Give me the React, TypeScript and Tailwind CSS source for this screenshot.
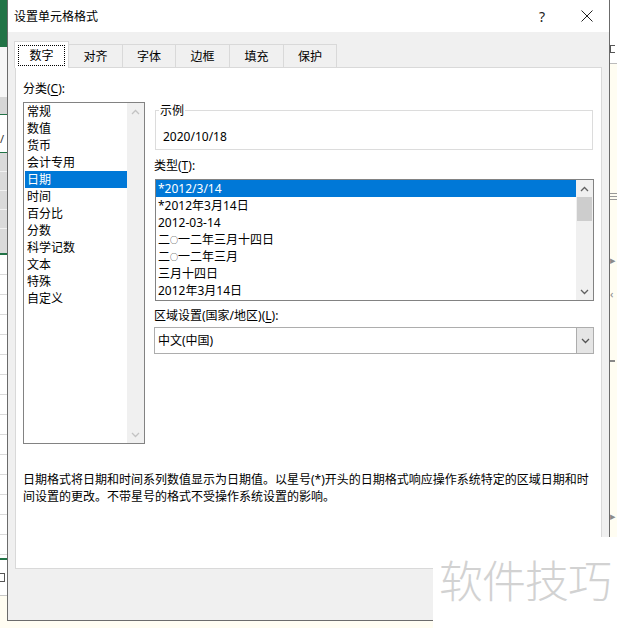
import type { ReactNode } from "react";

const categories = [
  "常规",
  "数值",
  "货币",
  "会计专用",
  "日期",
  "时间",
  "百分比",
  "分数",
  "科学记数",
  "文本",
  "特殊",
  "自定义",
];

const Zero = () => <span className="text-[8px] align-[1px]">○</span>;

const types: ReactNode[] = [
  "*2012/3/14",
  "*2012年3月14日",
  "2012-03-14",
  <>
    二<Zero />一二年三月十四日
  </>,
  <>
    二<Zero />一二年三月
  </>,
  "三月十四日",
  "2012年3月14日",
];

const tabs = [
  { label: "对齐", w: "w-[55px]" },
  { label: "字体", w: "w-[54px]" },
  { label: "边框", w: "w-[55px]" },
  { label: "填充", w: "w-[55px]" },
  { label: "保护", w: "w-[54px]" },
];

const Chevron = ({ dir, className }: { dir: "up" | "down"; className?: string }) => (
  <svg width="9" height="6" viewBox="0 0 9 6" className={className}>
    <polyline
      points={dir === "up" ? "1,5 4.5,1.5 8,5" : "1,1 4.5,4.5 8,1"}
      fill="none"
      stroke="currentColor"
      strokeWidth="1.3"
    />
  </svg>
);

const Label = ({ children }: { children: ReactNode }) => (
  <div className="h-[17px] leading-[17px] text-[12px] text-[#000]">{children}</div>
);

const LeftStrip = () => (
  <div className="w-[7px] h-full flex flex-col shrink-0">
    <div className="h-[47px] bg-[#217346]" />
    <div className="h-[50px] bg-[#f7f7f7]" />
    <div className="h-[18px] bg-[#d6d6d6] border-b border-[#217346]" />
    <div className="h-[38px] bg-white border-b border-[#217346] text-[11px] leading-[20px] pt-[14px] text-[#333] overflow-hidden">
      /
    </div>
    <div className="h-[100px] bg-[#dadada] flex flex-col">
      <div className="h-[19px] border-b border-[#f2f2f2]" />
      <div className="h-[19px] border-b border-[#f2f2f2]" />
      <div className="h-[19px] border-b border-[#f2f2f2]" />
      <div className="h-[19px] border-b border-[#f2f2f2]" />
    </div>
    <div className="h-[2px] bg-[#217346]" />
    <div className="h-[303px] bg-white flex flex-col">
      {Array.from({ length: 15 }).map((_, i) => (
        <div key={i} className="h-[20px] border-b border-[#dadada] shrink-0" />
      ))}
    </div>
    <div className="h-[2px] bg-[#217346]" />
    <div className="h-[36px] bg-white flex items-center border-b border-[#c8c8c8]">
      <div className="w-[5px] h-[9px] border border-[#555] border-l-0" />
    </div>
    <div className="flex-1 bg-[#fffdf2]" />
  </div>
);

const RightStrip = () => (
  <div className="w-[7px] h-full flex flex-col shrink-0 text-[#8a8a8a] text-[11px] overflow-hidden">
    <div className="h-[34px] bg-white" />
    <div className="h-[30px] bg-white border-b border-[#bbb] flex items-center">
      <div className="w-[5px] h-[8px] border border-[#555] border-r-0" />
    </div>
    <div className="flex-1 bg-[#fffdf2] flex flex-col">
      <div className="mt-[128px] h-[10px] flex flex-col gap-[2px] pt-[1px]">
        <div className="h-px bg-[#999]" />
        <div className="h-px bg-[#999]" />
        <div className="h-px bg-[#999]" />
      </div>
      <div className="mt-[52px] leading-[12px]">▸</div>
      <div className="mt-[22px] leading-[12px]">‹</div>
      <div className="mt-[60px] h-[2px] w-[5px] bg-[#888]" />
      <div className="mt-[148px] leading-[12px]">▸</div>
    </div>
  </div>
);

const ScrollTrack = ({ dim, thumb }: { dim?: boolean; thumb?: boolean }) => (
  <div className="w-[17px] h-full bg-[#f0f0f0] flex flex-col shrink-0">
    <div className={`h-[17px] flex items-center justify-center ${dim ? "text-[#c3c3c3]" : "text-[#606060]"}`}>
      <Chevron dir="up" />
    </div>
    {thumb && <div className="h-[24px] mx-px bg-[#cdcdcd]" />}
    <div className="flex-1" />
    <div className={`h-[17px] flex items-center justify-center ${dim ? "text-[#c3c3c3]" : "text-[#606060]"}`}>
      <Chevron dir="down" />
    </div>
  </div>
);

const App = () => {
  return (
    <div className="w-[617px] h-[628px] relative overflow-hidden bg-[#fffdf2] flex items-start font-['Noto_Sans','Noto_Sans_CJK_SC',sans-serif]">
      <LeftStrip />

      <div className="w-[603px] h-[621px] shrink-0 border-x border-b border-[#6b6b6b] bg-[#f0f0f0] flex flex-col">
        {/* title bar */}
        <div className="h-[32px] bg-white flex items-center pl-[6px] shrink-0">
          <span className="text-[12px] leading-[17px] text-[#000]">设置单元格格式</span>
          <span className="ml-auto text-[14px] leading-[17px] text-[#222]">?</span>
          <svg width="12" height="12" viewBox="0 0 12 12" className="ml-[36px] mr-[16px] text-[#222]">
            <path d="M0.5 0.5 L11.5 11.5 M11.5 0.5 L0.5 11.5" stroke="currentColor" strokeWidth="1" />
          </svg>
        </div>

        <div className="flex-1 flex flex-col pt-[9px]">
          {/* tabs */}
          <div className="flex items-end h-[27px] pl-[6px] text-[12px] text-[#000]">
            <div className="relative z-10 w-[55px] h-[27px] bg-white border border-b-0 border-[#d9d9d9] p-[3px] pb-[2px]">
              <div className="h-full border border-dotted border-[#000] flex items-center justify-center leading-[17px]">
                数字
              </div>
            </div>
            {tabs.map((t) => (
              <div
                key={t.label}
                className={`${t.w} h-[24px] -ml-px bg-[#f0f0f0] border border-[#d9d9d9] flex items-center justify-center leading-[17px]`}
              >
                {t.label}
              </div>
            ))}
          </div>

          {/* panel */}
          <div className="ml-[7px] -mt-px w-[587px] h-[502px] bg-white border border-[#d9d9d9] flex flex-col pl-[7px] pt-[12px] text-[12px] text-[#000]">
            <div className="flex gap-[9px]">
              {/* category column */}
              <div className="w-[122px] flex flex-col">
                <Label>
                  分类(<span className="underline underline-offset-2">C</span>):
                </Label>
                <div className="mt-[5px] h-[342px] border border-[#828282] flex">
                  <div className="flex-1 flex flex-col">
                    {categories.map((c) => (
                      <div
                        key={c}
                        className={`h-[17px] leading-[17px] pl-[2px] ml-px ${
                          c === "日期" ? "bg-[#0078d7] text-white" : ""
                        }`}
                      >
                        {c}
                      </div>
                    ))}
                  </div>
                  <ScrollTrack dim />
                </div>
              </div>

              {/* right column */}
              <div className="w-[440px] flex flex-col pt-[22px]">
                <fieldset className="ml-px w-[438px] border border-[#dcdcdc] pl-[3px]">
                  <legend className="px-[1px] h-[17px] leading-[17px]">示例</legend>
                  <div className="pt-[9px] pb-[4px] pl-[4px] leading-[17px]">2020/10/18</div>
                </fieldset>

                <div className="mt-[7px]">
                  <Label>
                    类型(<span className="underline underline-offset-2">T</span>):
                  </Label>
                </div>
                <div className="mt-[5px] ml-px w-[439px] h-[122px] border border-[#828282] flex">
                  <div className="flex-1 flex flex-col">
                    {types.map((t, i) => (
                      <div
                        key={i}
                        className={`h-[17px] leading-[17px] pl-[2px] ${
                          i === 0 ? "bg-[#0078d7] text-white" : ""
                        }`}
                      >
                        {t}
                      </div>
                    ))}
                  </div>
                  <ScrollTrack thumb />
                </div>

                <div className="mt-[6px]">
                  <Label>
                    区域设置(国家/地区)(<span className="underline underline-offset-2">L</span>):
                  </Label>
                </div>
                <div className="mt-[3px] w-[440px] h-[27px] border border-[#adadad] flex bg-white">
                  <div className="flex-1 flex items-center pl-[3px] leading-[17px]">中文(中国)</div>
                  <div className="w-[17px] h-full bg-[#e5e5e5] border-l border-[#adadad] flex items-center justify-center text-[#555]">
                    <Chevron dir="down" />
                  </div>
                </div>
              </div>
            </div>

            <div className="mt-[27px] leading-[17px] whitespace-nowrap">
              日期格式将日期和时间系列数值显示为日期值。以星号(*)开头的日期格式响应操作系统特定的区域日期和时
              <br />
              间设置的更改。不带星号的格式不受操作系统设置的影响。
            </div>
          </div>
        </div>
      </div>

      <RightStrip />

      {/* watermark */}
      <div className="absolute left-[433px] top-[537px] w-[184px] h-[91px] bg-white flex items-center pl-[6px] pb-[4px]">
        <span className="text-[44px] leading-[50px] font-light text-[#d2d2d2] tracking-[-1px]">软件技巧</span>
      </div>
    </div>
  );
};

export default App;
